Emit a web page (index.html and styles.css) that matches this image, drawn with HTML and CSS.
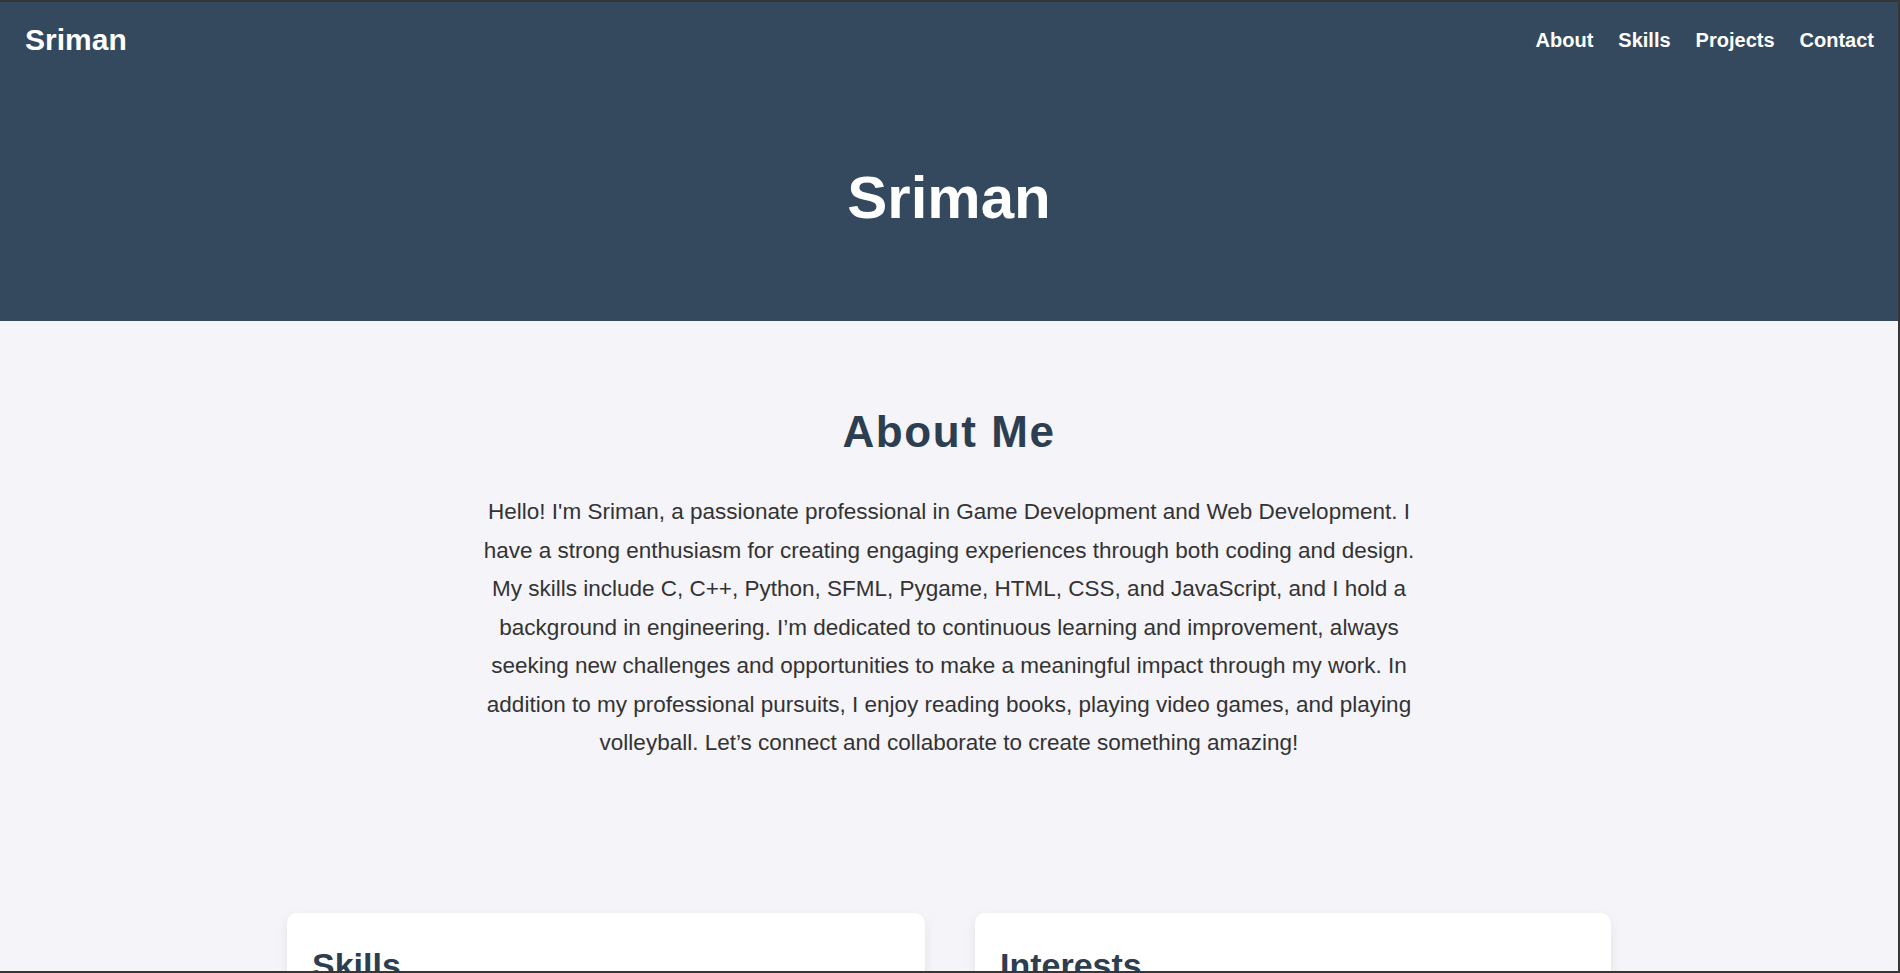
FILE: index.html
```html
<!DOCTYPE html>
<html lang="en">
<head>
<meta charset="utf-8">
<title>Sriman - Portfolio</title>
<link rel="stylesheet" href="styles.css">
</head>
<body>
  <header class="site-header">
    <nav class="nav">
      <div class="logo">Sriman</div>
      <ul class="nav-links">
        <li><a href="#about">About</a></li>
        <li><a href="#skills">Skills</a></li>
        <li><a href="#projects">Projects</a></li>
        <li><a href="#contact">Contact</a></li>
      </ul>
    </nav>
    <div class="hero">
      <h1 class="hero-title">Sriman</h1>
    </div>
  </header>

  <main>
    <section class="about" id="about">
      <h2 class="section-title">About Me</h2>
      <p class="about-text">Hello! I'm Sriman, a passionate professional in Game Development and Web Development. I have a strong enthusiasm for creating engaging experiences through both coding and design. My skills include C, C++, Python, SFML, Pygame, HTML, CSS, and JavaScript, and I hold a background in engineering. I’m dedicated to continuous learning and improvement, always seeking new challenges and opportunities to make a meaningful impact through my work. In addition to my professional pursuits, I enjoy reading books, playing video games, and playing volleyball. Let’s connect and collaborate to create something amazing!</p>
    </section>

    <section class="cards" id="skills">
      <div class="card">
        <h3 class="card-title">Skills</h3>
        <ul class="card-list">
          <li>C / C++</li>
          <li>Python</li>
          <li>SFML &amp; Pygame</li>
          <li>HTML, CSS &amp; JavaScript</li>
        </ul>
      </div>
      <div class="card">
        <h3 class="card-title">Interests</h3>
        <ul class="card-list">
          <li>Reading books</li>
          <li>Playing video games</li>
          <li>Playing volleyball</li>
        </ul>
      </div>
    </section>
  </main>
</body>
</html>
```

FILE: styles.css
```css
html, body {
  height: 100%;
}

body {
  margin: 0;
  height: 100vh;
  box-sizing: border-box;
  border-top: 2px solid #363636;
  border-right: 2px solid #363636;
  border-bottom: 2px solid #363636;
  overflow: hidden;
  background: #f4f4f9;
  font-family: "Liberation Sans", Arial, sans-serif;
  color: #333333;
}

.site-header {
  background: #34495e;
  color: #ffffff;
}

.nav {
  display: flex;
  justify-content: space-between;
  align-items: center;
  padding: 21px 24px 20px 25px;
}

.logo {
  font-size: 30px;
  font-weight: 700;
  line-height: 34px;
}

.nav-links {
  display: flex;
  gap: 25px;
  list-style: none;
  margin: 0;
  padding: 0;
}

.nav-links a {
  color: #ffffff;
  text-decoration: none;
  font-size: 20px;
  font-weight: 700;
}

.hero {
  padding: 87px 0 90px;
  text-align: center;
}

.hero-title {
  margin: 0;
  font-size: 60px;
  font-weight: 700;
  line-height: 67px;
}

.about {
  padding: 86px 0 0;
  text-align: center;
}

.section-title {
  margin: 0 0 36px;
  font-size: 44px;
  line-height: 50px;
  letter-spacing: 1.6px;
  color: #2c3e50;
}

.about-text {
  max-width: 950px;
  margin: 0 auto;
  font-size: 22.5px;
  line-height: 38.55px;
  color: #333333;
}

.cards {
  display: grid;
  grid-template-columns: 638px 636px;
  gap: 50px;
  justify-content: center;
  margin-top: 150px;
}

.card {
  background: #ffffff;
  border-radius: 10px;
  box-shadow: 0 4px 12px rgba(0, 0, 0, 0.08);
  padding: 33px 25px 25px;
}

.card-title {
  margin: 0 0 20px;
  font-size: 34px;
  line-height: 39px;
  color: #2c3e50;
}

.card-list {
  margin: 0;
  padding-left: 25px;
  font-size: 20px;
  line-height: 1.7;
}
```
